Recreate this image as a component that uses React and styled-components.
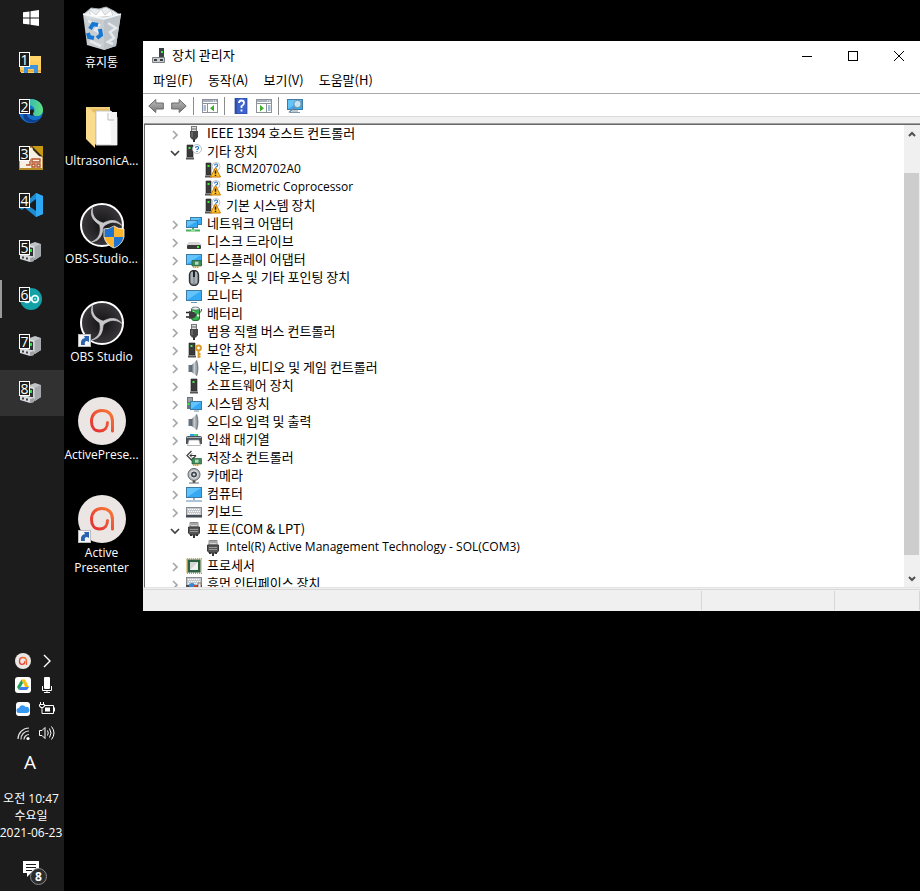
import React from "react";
import styled, { createGlobalStyle } from "styled-components";

const Global = createGlobalStyle`
  * { box-sizing: border-box; }
  body { margin: 0; background: #000; overflow: hidden; }
  body, button {
    font-family: "Noto Sans CJK KR", sans-serif;
    font-size: 13px;
    line-height: 18px;
  }
  button { border: 0; padding: 0; background: none; color: inherit; }
  ul { list-style: none; margin: 0; padding: 0; }
  svg { display: block; flex: none; }
`;

const LATIN = '"Open Sans", "Noto Sans CJK KR", sans-serif';

const Screen = styled.div`
  display: grid;
  grid-template-columns: 64px 79px minmax(0, 1fr);
  min-height: 100vh;
  background: #000;
`;

/* ---------- Taskbar ---------- */

const Taskbar = styled.aside`
  display: flex;
  flex-direction: column;
  background: #1c1c1c;
  color: #fff;
`;

const StartButton = styled.button`
  display: flex;
  align-items: center;
  justify-content: center;
  height: 36px;
  padding-right: 2px;
  margin-bottom: 5px;
`;

const AppList = styled.nav`
  display: flex;
  flex-direction: column;
  gap: 1px;
`;

const AppButton = styled.button`
  position: relative;
  display: flex;
  align-items: center;
  height: 46px;
  padding-left: 19px;
  background: ${(p) => (p.$focused ? "#313131" : "transparent")};

  &::before {
    content: "";
    position: absolute;
    left: 0;
    top: 4px;
    bottom: 4px;
    width: ${(p) => (p.$marked ? 2 : 0)}px;
    background: #9a9a9a;
  }
`;

const AppIcon = styled.span`
  position: relative;
  display: block;
  width: 24px;
  height: 24px;
`;

const KeyBadge = styled.span`
  position: absolute;
  top: 0;
  left: 0;
  width: 11px;
  height: 15px;
  border: 1px solid #fff;
  background: #1c1c1c;
  color: #fff;
  font: 14px/13px "Open Sans", sans-serif;
  text-align: center;
`;

const Tray = styled.div`
  display: grid;
  grid-template-columns: 24px 24px;
  grid-auto-rows: 24px;
  place-items: center;
  margin-top: auto;
  padding-left: 11px;
`;

const TrayButton = styled.button`
  display: flex;
`;

const ImeButton = styled.button`
  height: 34px;
  padding-right: 4px;
  font: 19px/34px "Open Sans", sans-serif;
`;

const Clock = styled.time`
  display: flex;
  flex-direction: column;
  align-items: center;
  margin: 11px -4px 0;
  padding-right: 2px;
  font-family: ${LATIN};
  font-size: 12px;
  line-height: 17px;
  white-space: nowrap;
`;

const NoticeButton = styled.button`
  display: flex;
  justify-content: center;
  height: 50px;
  padding: 19px 0 0 6px;
`;

/* ---------- Desktop ---------- */

const DesktopIcons = styled.ul`
  display: grid;
  grid-auto-rows: 98px;
  align-content: start;
  padding: 5px 4px 0 0;
`;

const Shortcut = styled.button`
  display: flex;
  flex-direction: column;
  align-items: center;
  gap: 2px;
  width: 100%;
  color: #fff;
  font-family: ${LATIN};
  font-size: 12px;
  line-height: 15px;
`;

const ShortcutLabel = styled.span`
  white-space: pre-line;
`;

/* ---------- Device manager window ---------- */

const Window = styled.main`
  display: flex;
  flex-direction: column;
  height: calc(100vh - 321px);
  margin: 41px -2px 0 0;
  background: #f0f0f0;
  color: #000;
`;

const TitleBar = styled.header`
  display: flex;
  align-items: center;
  height: 29px;
  padding-left: 8px;
  background: #fff;
`;

const Title = styled.h1`
  flex: 1;
  margin: 0 0 0 5px;
  padding-bottom: 2px;
  font-size: 13px;
  font-weight: 400;
`;

const CaptionButton = styled.button`
  display: flex;
  align-items: center;
  justify-content: center;
  width: 46px;
  height: 29px;
`;

const MenuBar = styled.nav`
  display: flex;
  gap: 1px;
  height: 23px;
  padding: 0 3px;
  background: #fff;
`;

const MenuButton = styled.button`
  padding: 0 7px 3px;
  white-space: nowrap;
`;

const Toolbar = styled.div`
  display: flex;
  align-items: center;
  height: 24px;
  padding: 2px 0 0 4px;
  border-top: 1px solid #a8a8ac;
  border-bottom: 1px solid #dcdcdc;
  background: #fff;
`;

const ToolButton = styled.button`
  display: flex;
  justify-content: center;
  width: 18px;
  margin-right: ${(p) => p.$gap || 0}px;
`;

const ToolSeparator = styled.span`
  width: 1px;
  height: 18px;
  margin-right: 7px;
  background: #8c8c8c;
`;

const TreePane = styled.section`
  display: flex;
  flex: 1;
  min-height: 0;
  margin: 7px 1px 0;
  border: solid #696969;
  border-width: 1px 0 0 1px;
  border-bottom: 1px solid #e3e3e3;
  background: #fff;
  box-shadow: 0 -1px 0 #a0a0a0;
`;

const Tree = styled.ul`
  flex: 1;
  min-width: 0;
  overflow: hidden;
`;

const TreeRow = styled.li`
  display: flex;
  align-items: center;
  gap: 5px;
  height: 18px;
  padding-left: ${(p) => (p.$child ? 60 : 22)}px;
`;

const Expander = styled.button`
  display: flex;
  justify-content: center;
  width: 16px;
  margin-right: -2px;
  padding-top: 2px;
`;

const RowLabel = styled.span`
  padding-bottom: 2px;
  font-family: ${(p) => (p.$latin ? LATIN : "inherit")};
  font-size: ${(p) => (p.$latin ? 12 : 13)}px;
  line-height: 16px;
  white-space: nowrap;
`;

const ScrollBar = styled.div`
  display: flex;
  flex-direction: column;
  width: 17px;
  background: #f0f0f0;
`;

const ScrollButton = styled.button`
  display: flex;
  align-items: center;
  justify-content: center;
  width: 15px;
  height: 17px;
`;

const ScrollTrack = styled.div`
  flex: 1;
  display: grid;
  grid-template-rows: 31fr 382fr 15fr;
`;

const ScrollThumb = styled.div`
  grid-row: 2;
  width: 15px;
  background: #cdcdcd;
`;

const StatusBar = styled.footer`
  display: flex;
  height: 22px;
  margin-top: 1px;
  padding: 1px 2px 1px 0;
  border-top: 1px solid #d7d7d7;
`;

const StatusCell = styled.div`
  flex: ${(p) => p.$size || "1"};
  border-right: 1px solid #d7d7d7;
`;

/* ---------- Drawings ---------- */

const Svg = ({ s = 16, children, h }) => (
  <svg width={s} height={h || s} viewBox={`0 0 ${s} ${h || s}`} aria-hidden="true">{children}</svg>
);

const Tower = ({ x = 0, w = 7 }) => (
  <g transform={`translate(${x} 0)`}>
    <path d={`M1 1h${w - 1}v12h-${w - 1}z`} fill="#3a3a3a" stroke="#222" strokeWidth=".6" />
    <rect x="0" y="13.5" width={w + 1} height="2" fill="#555" />
    <rect x="2.5" y="3" width="2" height="2" fill="#3df03d" />
  </g>
);

const Screen16 = ({ x = 0, y = 2, w = 16, h = 10 }) => (
  <g>
    <rect x={x + 0.5} y={y + 0.5} width={w - 1} height={h - 1} fill="#36a9f5" stroke="#3b7ba6" />
    <path d={`M${x + 1} ${y + h - 1}V${y + 1}H${x + w - 1}z`} fill="#62c4fb" />
  </g>
);

const Question = ({ cx = 11, cy = 5, r = 4.5 }) => (
  <g>
    <circle cx={cx} cy={cy} r={r} fill="#fff" stroke="#a9b2ba" strokeWidth=".8" />
    <path d={`M${cx - 1.4} ${cy - 1}q0-1.5 1.5-1.5t1.5 1.4q0 .9-1.5 1.6v.6M${cx} ${cy + 1.9}v1`} fill="none" stroke="#1b6fc4" strokeWidth="1.1" />
  </g>
);

const Card = () => (
  <g>
    <path d="M6 8.5h9.5V14H6z" fill="#3f8a58" stroke="#245c38" strokeWidth=".7" />
    <rect x="9" y="9.7" width="3.5" height="3" fill="#b7d8c0" />
    <path d="M7 15h6" stroke="#e3a020" strokeWidth="2" strokeDasharray="1.4 .6" />
  </g>
);

const Keys = ({ y = 3 }) => (
  <g>
    <rect x=".5" y={y + 0.5} width="15" height="9" fill="#c4c8cc" stroke="#858b91" />
    <path d={`M2 ${y + 2.5}h12M3 ${y + 4.5}h11M2 ${y + 6.5}h12`} stroke="#fff" strokeDasharray="1.2 .8" />
    <rect x="0" y={y + 8} width="16" height="2.5" fill="#454b52" />
  </g>
);

const Speaker = () => (
  <Svg>
    <defs>
      <linearGradient id="spk"><stop stopColor="#566069" /><stop offset=".5" stopColor="#cfd4d8" /><stop offset="1" stopColor="#7d868d" /></linearGradient>
    </defs>
    <path d="M2.500 5h3.500v7H2.500z" fill="#66727c" />
    <path d="M5.500 5L11 0v16l-5.500-4z" fill="url(#spk)" />
    <path d="M10.500 .5q2.500 7.500 0 15" fill="#b5bbc0" stroke="#7b838a" strokeWidth="1.400" />
  </Svg>
);

const Usb = () => (
  <Svg>
    <rect x="5.5" y=".5" width="5" height="5" fill="#ddd" stroke="#777" />
    <path d="M7 2v2M9 2v2" stroke="#666" />
    <path d="M4 5h8v6l-2 2.5H6L4 11z" fill="#474747" />
    <path d="M6 6v5" stroke="#858585" />
    <path d="M8 13v3" stroke="#333" strokeWidth="2" />
  </Svg>
);

const Port = () => (
  <Svg>
    <path d="M4 .5h8V5H4z" fill="#d5d5d5" stroke="#888" />
    <path d="M6 1v2M8 1v2M10 1v2" stroke="#777" />
    <path d="M2.5 5h11v6l-2 2h-7l-2-2z" fill="#555" stroke="#3c3c3c" />
    <path d="M4 7.5h8M4 9.5h8" stroke="#999" />
    <path d="M8 13v3M5 12v2M11 12v2" stroke="#333" strokeWidth="2" />
  </Svg>
);

const ICONS = {
  usb: <Usb />,
  port: <Port />,
  speaker: <Speaker />,
  other: <Svg><Tower x={0} w={7} /><Question /></Svg>,
  warning: (
    <Svg>
      <Tower w={6} /><Question cx={11} cy={4.5} r={4} />
      <path d="M10.5 5.5l5 9.5h-10z" fill="#ffc32b" stroke="#c87800" strokeLinejoin="round" />
      <path d="M10.5 8.5v3.2M10.5 12.7v1.3" stroke="#222" strokeWidth="1.5" />
    </Svg>
  ),
  network: (
    <Svg>
      <Screen16 x={4} y={1} w={12} h={8} /><Screen16 x={0} y={4} w={12} h={8} />
      <path d="M7 12v2M0 14.5h14" stroke="#4cae5c" strokeWidth="2" /><path d="M5 14.5h4" stroke="#9be3a4" strokeWidth="2" />
    </Svg>
  ),
  disk: (
    <Svg>
      <path d="M3 8h10l3 3H0z" fill="#d6d6d6" /><rect x="1" y="11" width="14" height="4" rx="1" fill="#3b3b3b" />
      <rect x="11" y="12" width="2" height="2" fill="#4bf04b" />
    </Svg>
  ),
  display: <Svg><Screen16 y={2} h={11} /><Card /></Svg>,
  mouse: (
    <Svg>
      <rect x="3.5" y=".5" width="9" height="15" rx="4.5" fill="#8e969d" stroke="#2f3438" strokeWidth="1.4" />
      <path d="M6 2v11M10 2v11" stroke="#c9cfd4" /><path d="M8 1v6" stroke="#222" strokeWidth="2" />
    </Svg>
  ),
  monitor: (
    <Svg><Screen16 y={2} h={11} /><path d="M5 14.5h6" stroke="#6c93ab" /></Svg>
  ),
  battery: (
    <Svg>
      <rect x="5.5" y="1.5" width="8" height="13" rx="2.5" fill="#35b34c" stroke="#236b30" />
      <ellipse cx="9.5" cy="2.5" rx="3.5" ry="1.6" fill="#e8efe8" stroke="#557" strokeWidth=".6" />
      <path d="M7.500 5v2" stroke="#c9f5cf" strokeWidth="1.500" />
      <path d="M13 7q3-1 2.5-4" fill="none" stroke="#444" />
      <path d="M0 6.500h3M0 11h3" stroke="#222" strokeWidth="1.4" />
      <path d="M3 5l5 1 3 3-3 3-5 1z" fill="#3d3d3d" /><path d="M11 9l2 1" stroke="#eee" strokeWidth="2" />
    </Svg>
  ),
  security: (
    <Svg>
      <Tower x={2} />
      <circle cx="12.500" cy="6" r="2.4" fill="none" stroke="#d99a26" strokeWidth="2" />
      <path d="M12.500 8v8M12.500 12h2M12.500 14.5h2" stroke="#d99a26" strokeWidth="1.8" />
    </Svg>
  ),
  software: <Svg><Tower x={4} w={7} /></Svg>,
  system: (
    <Svg>
      <path d="M1 1h6v12H1z" fill="#6d747a" /><path d="M2 3h4M2 5h4" stroke="#c8ccd0" />
      <rect x="1.5" y="7" width="2" height="2" fill="#3df03d" /><Screen16 x={4} y={5} w={12} h={9} />
      <path d="M8 15h5" stroke="#6c93ab" />
    </Svg>
  ),
  printer: (
    <Svg>
      <path d="M4 2h8v4H4z" fill="#2f9cec" /><path d="M8 2h3v3H8z" fill="#49d18a" />
      <path d="M0 6q0-2 2-2h12q2 0 2 2v6H0z" fill="#4e565d" /><path d="M1 5.5h14" stroke="#aab1b7" />
      <path d="M3 8h10l1.500 5.500h-13z" fill="#fff" stroke="#999" strokeWidth=".7" />
    </Svg>
  ),
  storage: (
    <Svg>
      <path d="M5.5 1L1 5.5 5.5 10 10 5.5" fill="#fff" stroke="#444" strokeWidth="1.3" />
      <path d="M4 5.5h6M4 5.5l2-2M4 5.5l2 2" stroke="#333" fill="none" /><Card />
    </Svg>
  ),
  camera: (
    <Svg>
      <circle cx="8" cy="6.5" r="6" fill="#b9bec2" stroke="#5c6165" />
      <circle cx="8" cy="6.5" r="3.6" fill="#40464b" stroke="#eee" /><circle cx="8" cy="6.5" r="1.3" fill="#c7d8e4" />
      <path d="M7 13h2v1.500H7zM3 15h10" stroke="#666" />
    </Svg>
  ),
  computer: (
    <Svg><Screen16 y={1} h={11} /><path d="M7 12h2v2H7z" fill="#9db1c0" /><path d="M0 15h16" stroke="#8fa9c9" strokeWidth="1.4" /></Svg>
  ),
  keyboard: <Svg><Keys /></Svg>,
  cpu: (
    <Svg>
      <rect x=".8" y=".8" width="14.400" height="14.400" fill="none" stroke="#c99a2e" strokeWidth="1.5" strokeDasharray="1 1" />
      <rect x="1.500" y="1.500" width="13" height="13" fill="#2c6143" /><rect x="4" y="4" width="8" height="8" fill="#d6d6d6" />
      <path d="M4 12l8-8v8z" fill="#f1f1f1" />
    </Svg>
  ),
  hid: (
    <Svg>
      <Keys y={1} /><circle cx="6" cy="10" r="3" fill="#3189d8" /><path d="M8 9h3v4H8z" fill="#c8452f" />
      <path d="M12 7h3v7h-3z" fill="#e8e8e8" stroke="#666" strokeWidth=".7" />
    </Svg>
  ),
};

const Shape = ({ s, children }) => (
  <svg width={s} height={s} viewBox="0 0 48 48" aria-hidden="true">{children}</svg>
);

const RecycleBin = () => (
  <Shape s={48}>
    <path d="M6 9l7-6 8 1 7-2 8 4 6 4-5 4H9z" fill="#e9ecef" stroke="#aab1b8" />
    <path d="M12 5l6 5 5-6 4 6 6-5 2 6-23 2z" fill="#fff" stroke="#c3c8cc" strokeWidth=".8" />
    <path d="M5 9l4 31 17 5 12-4 5-32-17 5z" fill="#d3d8dc" fillOpacity=".95" />
    <path d="M26 14v31l12-4 5-32z" fill="#bcc3c9" />
    <path d="M30 18l8 5-6 4 4 6-6 4 5 2M10 16l11 4-4 5 6 4M12 36l11 5" fill="none" stroke="#e6eaed" strokeWidth="2.500" />
    <path d="M5 9l21 5 17-5" fill="none" stroke="#f4f6f7" strokeWidth="1.500" />
    <path d="M12 24l3-5 5 1M22 24l1 6-4 3M16 33l-5-1-1-4" fill="none" stroke="#1478d4" strokeWidth="4" />
  </Shape>
);

const Folder = () => (
  <Shape s={48}>
    <path d="M8 4h24v37H15z" fill="#f1cf7a" />
    <path d="M14 6h17v35H17z" fill="#e8bd5d" />
    <path d="M18 8h15l6 6v28H18z" fill="#fff" stroke="#c9c9c9" />
    <path d="M32 9h7v33h-6z" fill="#f4f4f4" /><path d="M30 10v7h6" fill="none" stroke="#bbb" />
    <path d="M8 4l9 6v35l-9-9z" fill="#fbdc8c" />
  </Shape>
);

const ShortcutArrow = () => (
  <g>
    <rect x=".5" y="35.500" width="12" height="12" fill="#f5f5f5" stroke="#bbb" />
    <path d="M3 46q-1-6 4-7l-1-2h5v6l-2-1q-3 0-2 4z" fill="#2b63b0" />
  </g>
);

const Obs = ({ shield, linked }) => (
  <Shape s={48}>
    <defs><radialGradient id="ob"><stop stopColor="#131214" /><stop offset="1" stopColor="#39373b" /></radialGradient></defs>
    <circle cx="24" cy="24" r="21" fill="url(#ob)" stroke="#fff" strokeWidth="2" />
    {[0, 120, 240].map((a) => (
      <path key={a} transform={`rotate(${a} 24 24)`} d="M24.500 25.500C16 21 11 15 14.500 6.500C13.500 14 17 19.500 25 22z" fill="#c9c8cb" stroke="#c9c8cb" strokeWidth=".7" strokeLinejoin="round" />
    ))}
    {shield && (
      <g>
        <path d="M26 28q6 0 10-3 4 3 10 3v8q-2 8-10 11-8-3-10-11z" fill="#ffb62e" stroke="#fff" strokeWidth=".8" />
        <path d="M26.500 28.300q5 0 9.500-3V36h-9.500zM36 36h9.500q-2 8-9.500 10.500z" fill="#1f74d2" />
      </g>
    )}
    {linked && <ShortcutArrow />}
  </Shape>
);

const Presenter = ({ s = 48, linked }) => (
  <Shape s={s}>
    <defs><linearGradient id="ap" x1="0" y1="1" x2="1" y2="0"><stop stopColor="#e22d35" /><stop offset="1" stopColor="#f77a35" /></linearGradient></defs>
    <circle cx="24" cy="24" r="24" fill="#ebe6e3" />
    <path d="M29.500 25.500c0 5-3 8.500-8 8.500s-8-4-8-9.500c0-6.500 4-11 10-11 7 0 11 4 11 11V34" fill="none" stroke="url(#ap)" strokeWidth={s < 20 ? 4 : 3} strokeLinecap="round" />
    {linked && <ShortcutArrow />}
  </Shape>
);

const Server = () => (
  <Svg s={24}>
    <path d="M8 5l8-3 6 2v12l-6 4-8-3z" fill="#c2c5c8" /><path d="M15 7l7-3v12l-7 4z" fill="#a4a8ac" />
    <path d="M10 6l5 1v11" fill="none" stroke="#e4e6e8" /><path d="M9 7l5 1v8H9z" fill="#2d2f31" /><rect x="11" y="9" width="2" height="3" fill="#2fe04a" />
    <path d="M1 15l5-1 9 3v4l-4 1-10-3z" fill="#d8dadd" /><path d="M11 18l4-1v4l-4 1z" fill="#9ea2a6" />
    <path d="M3 16.500h2v2H3zM7 17.500h2v2H7z" fill="#444" />
  </Svg>
);

const APPS = [
  {
    name: "파일 탐색기",
    icon: (
      <Svg s={24}><path d="M2 4h20v17H2z" fill="#ffd46b" /><path d="M1 9h21v11H1z" fill="#ffce5c" /><path d="M1 18h21v2H1z" fill="#eeb03c" /><path d="M5 13h14v8h-4v-4H9v4H5z" fill="#3f93de" /></Svg>
    ),
  },
  {
    name: "Microsoft Edge",
    icon: (
      <Svg s={24}>
        <defs><linearGradient id="ed"><stop stopColor="#1c9de0" /><stop offset="1" stopColor="#5fe07a" /></linearGradient></defs>
        <circle cx="12" cy="12" r="12" fill="#1670c8" /><path d="M0 12C1 4 7 0 12 0c7 0 12 5 12 11 0 4-3 6-6 6-4 0-5-2-3-4 2-4-2-7-6-7-5 0-8 3-9 6z" fill="url(#ed)" />
        <path d="M8 10c-2 7 3 12 9 11 3-1 5-2 6-4-4 7-12 8-17 4-3-4-2-9 2-11z" fill="#0d3f91" />
        <path d="M11 11q4-2 4 1.500-2 2.500 0 4h-3q-3-2-1-5.500z" fill="#1c1c1c" />
      </Svg>
    ),
  },
  {
    name: "LibreOffice Impress",
    icon: (
      <Svg s={24}>
        <path d="M0 1h15l9 9v14H0z" fill="#f6f1e4" stroke="#a8791c" strokeWidth="1.500" /><path d="M13 0h11v11z" fill="#c79a12" /><path d="M13 0l11 11-4-1-6-6z" fill="#3a2c0b" />
        <path d="M6 14h5v5H7M13 13h8v3h-8zM13 18h3v3h-3zM18 18h3v3h-3z" fill="none" stroke="#b5532a" strokeWidth="1.400" /><path d="M0 23h24" stroke="#b88a22" strokeWidth="2" />
      </Svg>
    ),
  },
  {
    name: "Visual Studio Code",
    icon: (
      <Svg s={24}><path d="M17 0l7 3v18l-7 3L0 10l3-2 14 10V6L3 17l-3-2z" fill="#1f8ad2" /><path d="M17 0l7 3v18l-7 3z" fill="#2fa8f4" /></Svg>
    ),
  },
  { name: "장치 관리자", icon: <Server /> },
  {
    name: "Arduino",
    marked: true,
    icon: (
      <Svg s={24}><circle cx="12" cy="12" r="11" fill="#13a0a7" /><circle cx="16" cy="12" r="3.300" fill="none" stroke="#e8ffff" strokeWidth="1.800" /><circle cx="8" cy="12" r="3.300" fill="none" stroke="#e8ffff" strokeWidth="1.800" /><path d="M15 12h2" stroke="#fff" /></Svg>
    ),
  },
  { name: "장치 관리자", icon: <Server /> },
  { name: "장치 관리자", icon: <Server />, focused: true },
];

const TRAY = [
  ["ActivePresenter", <Presenter s={16} />],
  ["숨겨진 아이콘", <Svg><path d="M5 2l6 6-6 6" fill="none" stroke="#fff" strokeWidth="1.400" /></Svg>],
  ["Google Drive", <Svg><rect width="16" height="16" rx="3" fill="#fff" /><path d="M6.500 2.500L2 10l2 3 4-7z" fill="#1da45b" /><path d="M6.500 2.500h3.500L14 10h-4z" fill="#fbbf12" /><path d="M5.500 10H14l-2 3H4z" fill="#3f7ee8" /></Svg>],
  ["마이크", <Svg><rect x="5" y="0" width="6" height="12" rx="1" fill="#fff" /><path d="M3.500 9v4.500h9V9M8 13v2M5 15.500h6" fill="none" stroke="#fff" /></Svg>],
  ["iCloud", <Svg><rect x="1" y="1" width="14" height="14" rx="3" fill="#fff" /><path d="M4 12a2.500 2.500 0 010-5 3.500 3.500 0 016.500-1A3 3 0 0112 12z" fill="#3798f2" /></Svg>],
  ["배터리", <Svg><path d="M4 12.500h10.500v-8H6M15.500 6.500v4" fill="none" stroke="#fff" /><path d="M6 6.500h5v4H6z" fill="#fff" /><path d="M1.500 1v2M4.500 1v2M.5 3.500h5v2h-1v1h-3v-1h-1zM3 6v6.500h2" fill="none" stroke="#fff" /></Svg>],
  ["Wi-Fi", <Svg><path d="M3 14A11 11 0 0114 3M6 14.500A8 8 0 0114 6M9 14.500A5 5 0 0114 9.500" fill="none" stroke="#ddd" strokeWidth="1.200" /><circle cx="13" cy="13.500" r="1.600" fill="#fff" /></Svg>],
  ["볼륨", <Svg><path d="M.5 5.500H3L6 2.500v11l-3-3H.5zM8.500 5.500q1.500 2.500 0 5M10.500 3.500q3 4.500 0 9M12.500 1.500q5 6.500 0 13" fill="none" stroke="#fff" /></Svg>],
];

const SHORTCUTS = [
  ["휴지통", <RecycleBin />],
  ["UltrasonicA...", <Folder />],
  ["OBS-Studio...", <Obs shield />],
  ["OBS Studio", <Obs linked />],
  ["ActivePrese...", <Presenter />],
  ["Active\nPresenter", <Presenter linked />],
];

const DEVICES = [
  ["IEEE 1394 호스트 컨트롤러", "usb"],
  ["기타 장치", "other", "open"],
  ["BCM20702A0", "warning", "child"],
  ["Biometric Coprocessor", "warning", "child"],
  ["기본 시스템 장치", "warning", "child"],
  ["네트워크 어댑터", "network"],
  ["디스크 드라이브", "disk"],
  ["디스플레이 어댑터", "display"],
  ["마우스 및 기타 포인팅 장치", "mouse"],
  ["모니터", "monitor"],
  ["배터리", "battery"],
  ["범용 직렬 버스 컨트롤러", "usb"],
  ["보안 장치", "security"],
  ["사운드, 비디오 및 게임 컨트롤러", "speaker"],
  ["소프트웨어 장치", "software"],
  ["시스템 장치", "system"],
  ["오디오 입력 및 출력", "speaker"],
  ["인쇄 대기열", "printer"],
  ["저장소 컨트롤러", "storage"],
  ["카메라", "camera"],
  ["컴퓨터", "computer"],
  ["키보드", "keyboard"],
  ["포트(COM & LPT)", "port", "open"],
  ["Intel(R) Active Management Technology - SOL(COM3)", "port", "child"],
  ["프로세서", "cpu"],
  ["휴먼 인터페이스 장치", "hid"],
];

const isLatin = (text) => /^[\x20-\x7e]+$/.test(text);

const Chevron = ({ open }) => (
  <Svg s={10}>
    {open
      ? <path d="M1 3l4 4 4-4" fill="none" stroke="#404040" strokeWidth="1.700" />
      : <path d="M3 1l4 4-4 4" fill="none" stroke="#a6a6a6" strokeWidth="1.700" />}
  </Svg>
);

const Arrow = ({ flip }) => (
  <Svg>
    <defs><linearGradient id="arr" x2="0" y2="1"><stop stopColor="#bdbdbd" /><stop offset="1" stopColor="#777" /></linearGradient></defs>
    <path transform={flip ? "translate(16 0) scale(-1 1)" : undefined} d="M.8 8l7-6.500V5h7.500v6H7.800v3.500z" fill="url(#arr)" stroke="#6b6b6b" strokeLinejoin="round" />
  </Svg>
);

const PaneIcon = ({ right }) => (
  <Svg>
    <rect x=".5" y="1.500" width="15" height="13" fill="#fff" stroke="#8b929c" />
    <path d="M1 3h14" stroke="#aab2bd" strokeWidth="2" /><path d="M1 5.500h14" stroke="#8b929c" />
    <path d="M11 3h1M13 3h1" stroke="#fff" />
    {right
      ? <g><path d="M10.500 6v8" stroke="#8b929c" /><path d="M12 8h2.500M12 10h2.500M12 12h2.500" stroke="#4c79a8" /><path d="M4 7l4 3.200-4 3.200z" fill="#3cae2b" /></g>
      : <g><path d="M5.500 6v8" stroke="#8b929c" /><path d="M1.500 8H4M1.500 10H4M1.500 12H4" stroke="#4c79a8" /><path d="M12 7l-4 3.200 4 3.200z" fill="#3cae2b" /></g>}
  </Svg>
);

export default function App() {
  return (
    <>
      <Global />
      <Screen>
        <Taskbar>
          <StartButton aria-label="시작">
            <Svg s={16}><path d="M0 2.300L6.500 1.400V7.500H0zM7.500 1.300L16 0v7.500H7.500zM0 8.500h6.500v6.100L0 13.700zM7.500 8.500H16V16l-8.500-1.300z" fill="#fff" /></Svg>
          </StartButton>
          <AppList>
            {APPS.map((a, i) => (
              <AppButton key={i} aria-label={a.name} $marked={a.marked} $focused={a.focused}>
                <AppIcon>{a.icon}<KeyBadge>{i + 1}</KeyBadge></AppIcon>
              </AppButton>
            ))}
          </AppList>
          <Tray>
            {TRAY.map(([name, icon]) => <TrayButton key={name} aria-label={name}>{icon}</TrayButton>)}
          </Tray>
          <ImeButton>A</ImeButton>
          <Clock dateTime="2021-06-23T10:47">
            <span>오전 10:47</span>
            <span>수요일</span>
            <span>2021-06-23</span>
          </Clock>
          <NoticeButton aria-label="알림 8개">
            <svg width="26" height="26" viewBox="0 0 26 26">
              <path d="M1 1h16v12h-8l-4 4v-4H1z" fill="#fff" />
              <path d="M4 4.500h10M4 7.500h10M4 10.500h6" stroke="#1c1c1c" />
              <circle cx="16.500" cy="16.500" r="8" fill="#2c2c2c" stroke="#8b8b8b" />
              <text x="16.500" y="21" fill="#fff" fontSize="12" fontWeight="700" fontFamily="Noto Sans, sans-serif" textAnchor="middle">8</text>
            </svg>
          </NoticeButton>
        </Taskbar>

        <DesktopIcons>
          {SHORTCUTS.map(([label, icon]) => (
            <li key={label}><Shortcut>{icon}<ShortcutLabel>{label}</ShortcutLabel></Shortcut></li>
          ))}
        </DesktopIcons>

        <Window>
          <TitleBar>
            <Svg s={16}>
              <path d="M8 0h5v9H8z" fill="#3b4045" /><rect x="10" y="3" width="2" height="2" fill="#3df03d" />
              <path d="M1.500 9.500h12v5h-12z" fill="#c9cccf" stroke="#7b7f83" /><path d="M3 11h3v2H3zM9 11h3v2H9z" fill="#3b4045" />
            </Svg>
            <Title>장치 관리자</Title>
            <CaptionButton aria-label="최소화"><Svg s={10}><path d="M0 5.500h10" stroke="#000" /></Svg></CaptionButton>
            <CaptionButton aria-label="최대화"><Svg s={10}><rect x=".5" y=".5" width="9" height="9" fill="none" stroke="#000" /></Svg></CaptionButton>
            <CaptionButton aria-label="닫기"><Svg s={10}><path d="M0 0l10 10M10 0L0 10" stroke="#000" /></Svg></CaptionButton>
          </TitleBar>
          <MenuBar>
            {["파일(F)", "동작(A)", "보기(V)", "도움말(H)"].map((m) => <MenuButton key={m}>{m}</MenuButton>)}
          </MenuBar>
          <Toolbar>
            <ToolButton aria-label="뒤로" $gap={5}><Arrow /></ToolButton>
            <ToolButton aria-label="앞으로" $gap={5}><Arrow flip /></ToolButton>
            <ToolSeparator />
            <ToolButton aria-label="콘솔 트리 표시" $gap={5}><PaneIcon /></ToolButton>
            <ToolSeparator />
            <ToolButton aria-label="도움말" $gap={5}>
              <Svg s={16}><rect x="2" width="12" height="16" fill="#3c63cf" stroke="#27408f" strokeWidth=".7" /><path d="M3 0v16" stroke="#27408f" /><path d="M6 5q0-2.500 2.500-2.500T11 5q0 1.500-2.500 3.200V10M8.500 11.500v2" fill="none" stroke="#fff" strokeWidth="1.800" /></Svg>
            </ToolButton>
            <ToolButton aria-label="작업 창 표시" $gap={5}><PaneIcon right /></ToolButton>
            <ToolSeparator />
            <ToolButton aria-label="하드웨어 변경 사항 검색">
              <Svg><Screen16 y={1} h={11} /><path d="M5 13h6M3 14.500h10" stroke="#7e95a6" /><circle cx="10.500" cy="6" r="3.700" fill="#bfe5fb" stroke="#6f8ba0" /><path d="M8 9l-6 5.500" stroke="#6f8ba0" strokeWidth="1.600" /></Svg>
            </ToolButton>
          </Toolbar>
          <TreePane>
            <Tree role="tree" aria-label="장치">
              {DEVICES.map(([label, icon, kind]) => (
                <TreeRow key={label} role="treeitem" $child={kind === "child"}>
                  {kind !== "child" && <Expander aria-label={label}><Chevron open={kind === "open"} /></Expander>}
                  {ICONS[icon]}
                  <RowLabel $latin={isLatin(label)}>{label}</RowLabel>
                </TreeRow>
              ))}
            </Tree>
            <ScrollBar>
              <ScrollButton aria-label="위로"><Svg s={8}><path d="M1 6l3-3 3 3" fill="none" stroke="#505050" strokeWidth="2" /></Svg></ScrollButton>
              <ScrollTrack><ScrollThumb /></ScrollTrack>
              <ScrollButton aria-label="아래로"><Svg s={8}><path d="M1 2l3 3 3-3" fill="none" stroke="#505050" strokeWidth="2" /></Svg></ScrollButton>
            </ScrollBar>
          </TreePane>
          <StatusBar>
            <StatusCell />
            <StatusCell $size="0 0 133px" />
            <StatusCell $size="0 0 85px" />
          </StatusBar>
        </Window>
      </Screen>
    </>
  );
}
